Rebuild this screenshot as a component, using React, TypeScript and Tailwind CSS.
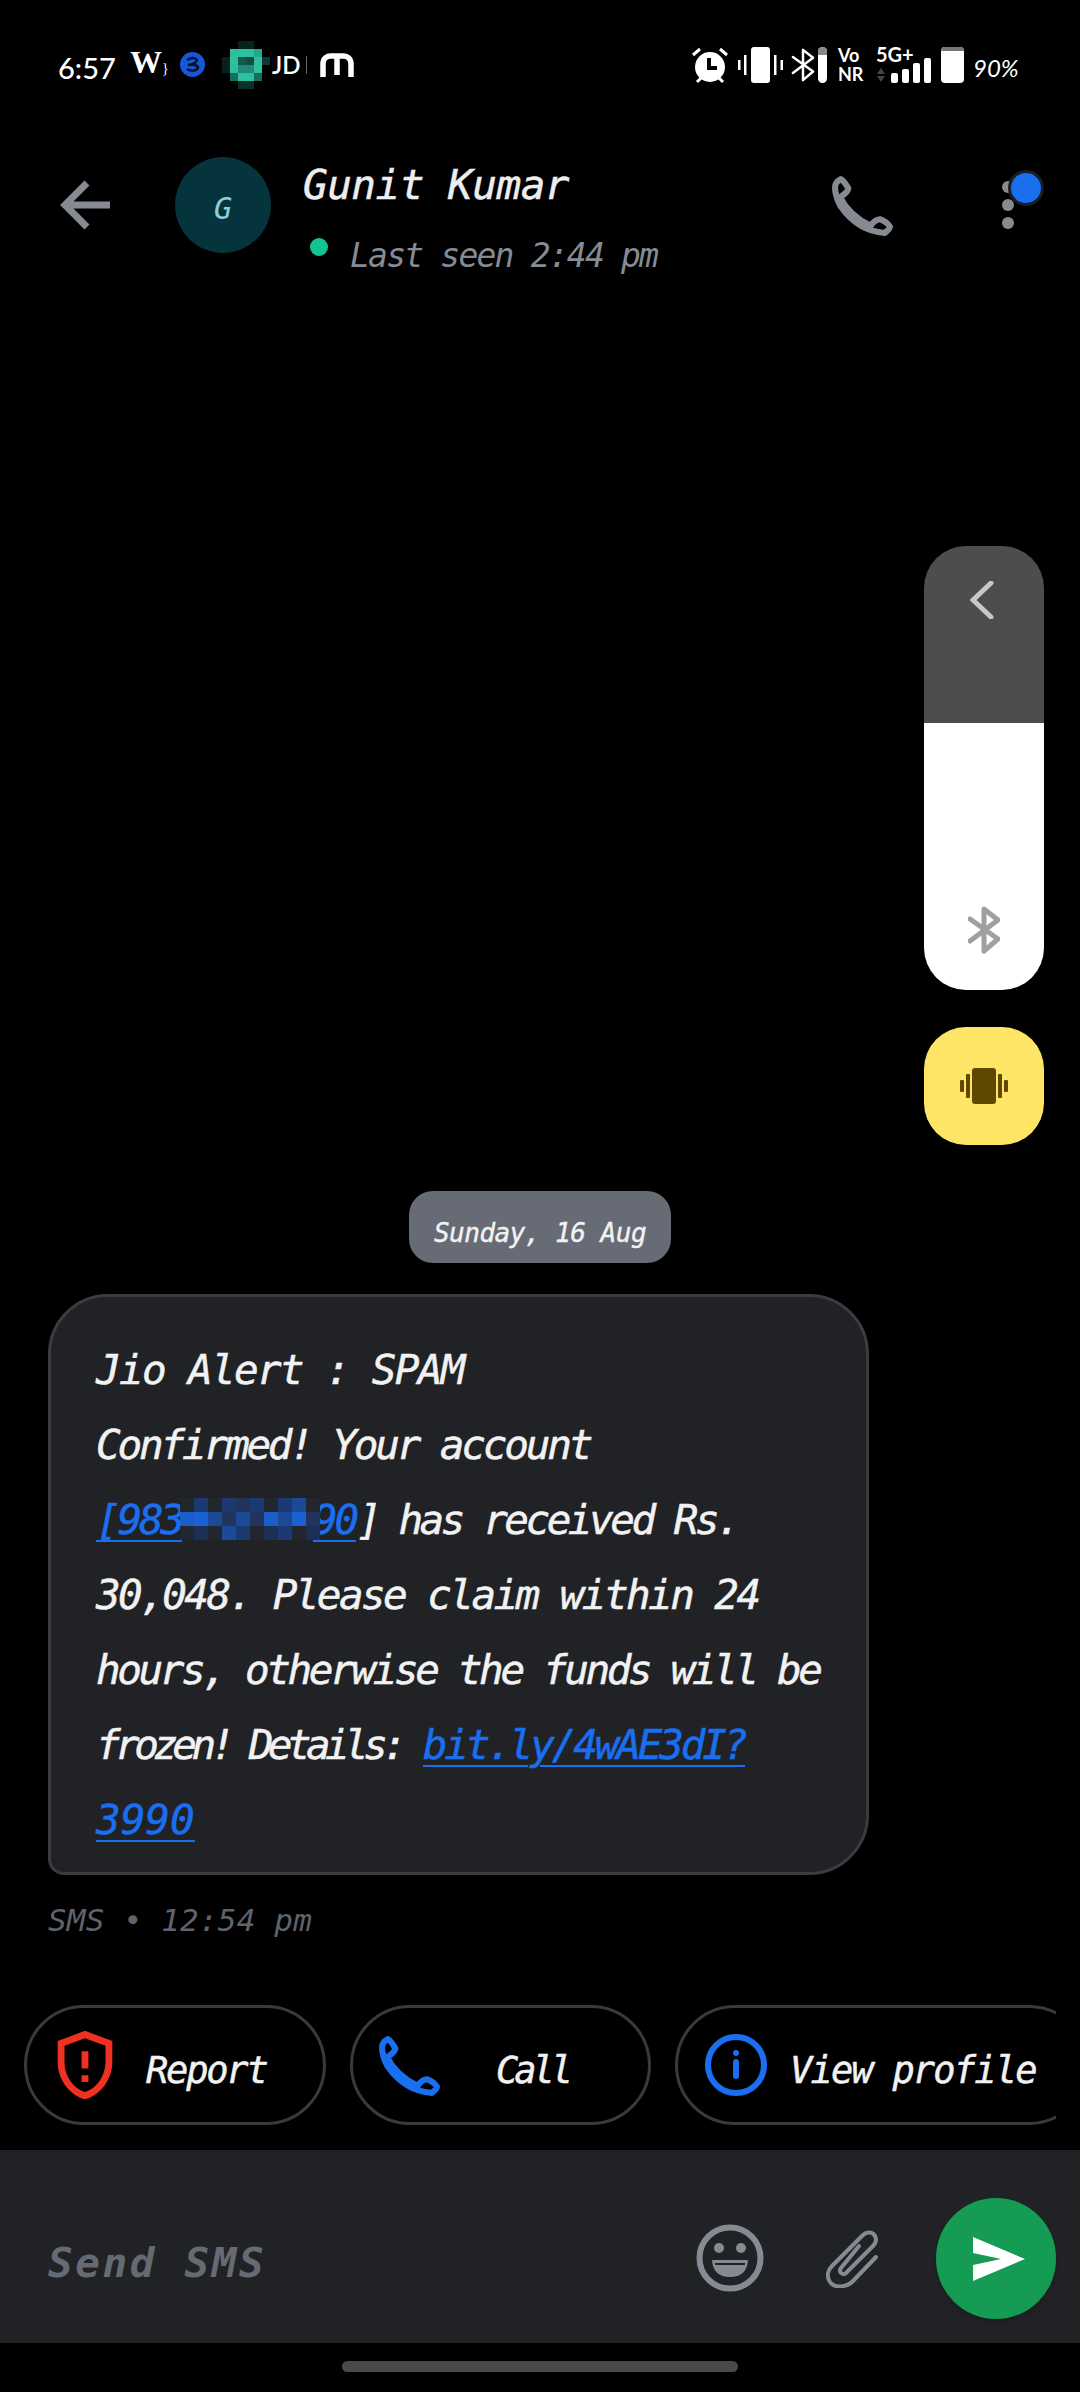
import type { ReactNode } from "react";

const bodyFont = "font-['DejaVu_Sans_Mono',monospace] italic";

const tealCells = [
  ["#000", "#000", "#04251f", "#04251f", "#000", "#000"],
  ["#000", "#2cc0a0", "#2cc0a0", "#2cc0a0", "#22a88c", "#000"],
  ["#06201b", "#2cc0a0", "#115a4c", "#0f4f43", "#2cc0a0", "#0a3a30"],
  ["#06201b", "#2cc0a0", "#1f8a75", "#1f8a75", "#2cc0a0", "#000"],
  ["#000", "#176d5c", "#2cc0a0", "#2cc0a0", "#176d5c", "#000"],
  ["#000", "#000", "#06322a", "#06322a", "#000", "#000"],
];

const mosaicCells = [
  ["#22262e", "#1b3a72", "#22262e", "#1b3a72", "#22335c", "#1b3a72", "#22262e", "#1b3a72", "#1c4a96", "#22262e"],
  ["#1a5ec8", "#1a62d2", "#1c4a96", "#22335c", "#1c4a96", "#22335c", "#1a5ec8", "#1c4a96", "#1a62d2", "#22335c"],
  ["#22262e", "#1c2f55", "#22262e", "#1c4a96", "#1b3a72", "#22262e", "#1c2f55", "#1b3a72", "#22262e", "#1c2f55"],
];

function Pixels({ cells, size, h }: { cells: string[][]; size: number; h?: number }) {
  const cols = cells[0].length;
  const rows = cells.length;
  const ch = h ?? size;
  return (
    <svg width={cols * size} height={rows * ch} className="block">
      {cells.map((row, y) =>
        row.map((c, x) => <rect key={x + "-" + y} x={x * size} y={y * ch} width={size + 0.5} height={ch + 0.5} fill={c} />)
      )}
    </svg>
  );
}

function PhoneIcon({ color, size }: { color: string; size: number }) {
  return (
    <svg width={size} height={size} viewBox="0 0 60 60" fill="none" stroke={color} strokeWidth="6" strokeLinejoin="round">
      <path d="M3 12 Q3 7 8.6 4 Q12 6 16 13 Q16.5 16 8 22 Q17 40 38 50 Q42 44 47 43.5 Q54 46 57 51 Q57 53 52 57 Q25 55 8 30 Q3 20 3 12 Z" />
    </svg>
  );
}

function Bluetooth({ color, w, h, sw }: { color: string; w: number; h: number; sw: number }) {
  return (
    <svg width={w} height={h} viewBox="0 0 32 50" fill="none" stroke={color} strokeWidth={sw} strokeLinejoin="round" strokeLinecap="round">
      <path d="M2 14 L30 34 L16 46 V4 L30 15 L2 36" />
    </svg>
  );
}

function StatusBar() {
  return (
    <div className="h-[130px] pl-[58px] pr-[60px] flex items-center justify-between text-white">
      <div className="flex items-center">
        <span className="font-['Lato',sans-serif] text-[29px] font-medium mt-[5px] w-[72px]">6:57</span>
        <span className="font-['Liberation_Serif',serif] font-bold text-[32px] w-[50px] -mt-[6px]">W<span className="text-[14px] font-normal">{"}"}</span></span>
        <svg width="25" height="25" viewBox="0 0 25 25" className="mr-[17px] -mt-[1px]">
          <circle cx="12.5" cy="12.5" r="12.5" fill="#1457d8" />
          <path d="M7 8 Q14 4 17 8 Q16 12 8 13 Q18 12 18 16 Q14 21 7 17" fill="none" stroke="#07102c" strokeWidth="2.5" />
        </svg>
        <div className="mr-[4px] w-[48px]"><Pixels cells={tealCells} size={8} /></div>
        <span className="font-['Lato',sans-serif] text-[24px] font-semibold w-[33px] -ml-[2px]">JD</span>
        <div className="w-px h-[18px] bg-[#666] mr-[13px] ml-[1px]"></div>
        <svg width="34" height="24" viewBox="0 0 34 24" fill="none" stroke="#fff" strokeWidth="5.5">
          <path d="M3 24 V11 C3 5 7 3 11 3 H23 C28 3 31 6 31 11 V24 M17 5 V22" />
        </svg>
      </div>
      <div className="flex items-center">
        <svg width="38" height="38" viewBox="0 0 38 38" className="mr-[9px]">
          <circle cx="19" cy="21" r="15" fill="#fff" />
          <path d="M18 12 V22 H26" fill="none" stroke="#000" strokeWidth="4" />
          <path d="M2 9 L9 3 M36 9 L29 3 M6 36 L10 32 M32 36 L28 32" stroke="#fff" strokeWidth="3" />
        </svg>
        <svg width="45" height="36" viewBox="0 0 45 36" className="mr-[8px]" fill="#fff">
          <rect x="13" y="0" width="19" height="36" rx="3" />
          <rect x="0" y="13" width="2.5" height="10" />
          <rect x="6" y="8" width="2.5" height="20" />
          <rect x="36" y="8" width="2.5" height="20" />
          <rect x="42.5" y="13" width="2.5" height="10" />
        </svg>
        <Bluetooth color="#fff" w={24} h={36} sw={3.5} />
        <div className="ml-[3px] w-[9px] h-[36px] rounded-full bg-white overflow-hidden mr-[11px]"><div className="h-[8px] bg-[#888]"></div></div>
        <div className="flex flex-col font-['Lato',sans-serif] font-bold text-[18px] leading-[19px] w-[38px]"><span>Vo</span><span>NR</span></div>
        <div className="w-[55px] relative h-[36px] mr-[10px]">
          <span className="absolute left-0 -top-[3px] font-['Lato',sans-serif] font-bold text-[20px] leading-[20px]">5G+</span>
          <svg width="10" height="14" viewBox="0 0 10 14" fill="#444" className="absolute left-0 bottom-[1px]">
            <path d="M5 0 L9 6 H1 Z M5 14 L9 8 H1 Z" />
          </svg>
          <div className="absolute right-0 bottom-0 flex items-end gap-[4px]">
            <div className="w-[7px] h-[10px] rounded-[2px] bg-white"></div>
            <div className="w-[7px] h-[14px] rounded-[2px] bg-white"></div>
            <div className="w-[7px] h-[20px] rounded-[2px] bg-white"></div>
            <div className="w-[7px] h-[25px] rounded-[2px] bg-white"></div>
          </div>
        </div>
        <div className="w-[23px] h-[36px] rounded-[4px] bg-white overflow-hidden mr-[9px]"><div className="h-[4px] bg-[#777]"></div></div>
        <span className="font-['Lato',sans-serif] italic text-[24px] mt-[5px] w-[47px]">90%</span>
      </div>
    </div>
  );
}

function Header() {
  return (
    <div className="h-[150px] flex items-center relative">
      <svg width="50" height="50" viewBox="0 0 50 50" fill="none" stroke="#868b93" strokeWidth="7" className="ml-[60px]">
        <path d="M50 25 H6 M27 3 L5 25 L27 47" />
      </svg>
      <div className="ml-[65px] w-[96px] h-[96px] rounded-full bg-[#06343c] flex items-center justify-center">
        <span className={bodyFont + " text-[#8fd0d6] text-[30px] mt-[6px]"}>G</span>
      </div>
      <div className="ml-[32px] self-start pt-[30px] flex flex-col">
        <div className={bodyFont + " text-[#eeeeee] text-[41px] leading-[50px] tracking-[-0.5px] [-webkit-text-stroke:0.5px]"}>Gunit Kumar</div>
        <div className="flex items-start mt-[28px]">
          <div className="ml-[7px] w-[18px] h-[18px] rounded-full bg-[#12c48f]"></div>
          <span className={bodyFont + " ml-[22px] text-[#868b93] text-[33px] leading-[36px] tracking-[-1.8px]"}>Last seen 2:44 pm</span>
        </div>
      </div>
      <div className="absolute left-[832px] top-[45px]"><PhoneIcon color="#868b93" size={61} /></div>
      <div className="absolute left-[1002px] top-[51px] flex flex-col gap-[6px]">
        <div className="w-[12px] h-[12px] rounded-full bg-[#868b93]"></div>
        <div className="w-[12px] h-[12px] rounded-full bg-[#868b93]"></div>
        <div className="w-[12px] h-[12px] rounded-full bg-[#868b93]"></div>
      </div>
      <div className="absolute left-[1008px] top-[40px] w-[36px] h-[36px] rounded-full bg-[#1a6ff0] border-[3px] border-[#1c1e24]"></div>
    </div>
  );
}

function FloatingVolume() {
  return (
    <div className="absolute left-[924px] top-[546px] w-[120px] flex flex-col gap-[37px]">
      <div className="h-[444px] rounded-[42px] overflow-hidden flex flex-col">
        <div className="h-[177px] bg-[#4d4d4d] flex justify-center pt-[35px]">
          <svg width="24" height="38" viewBox="0 0 24 38" fill="none" stroke="#c8c8c8" strokeWidth="5" strokeLinecap="round" className="-ml-[4px]">
            <path d="M21 2 L3 19 L21 36" />
          </svg>
        </div>
        <div className="flex-1 bg-white flex flex-col justify-end items-center pb-[35px]">
          <Bluetooth color="#a0a0a0" w={32} h={50} sw={5} />
        </div>
      </div>
      <div className="h-[118px] rounded-[42px] bg-[#ffe566] flex items-center justify-center">
        <svg width="48" height="36" viewBox="0 0 48 36" fill="#604800">
          <rect x="12" y="0" width="24" height="36" rx="3" />
          <rect x="0" y="12" width="4" height="12" rx="1" />
          <rect x="6" y="6" width="4" height="24" rx="1" />
          <rect x="38" y="6" width="4" height="24" rx="1" />
          <rect x="44" y="12" width="4" height="12" rx="1" />
        </svg>
      </div>
    </div>
  );
}

function Message() {
  const link = "text-[#1a6ff0] underline decoration-[2px] underline-offset-[6px]";
  return (
    <div className="ml-[48px] w-[821px] h-[581px] bg-[#202226] border-[3px] border-[#3a3c40] rounded-[60px] rounded-bl-[16px] pl-[45px] pt-[36px]">
      <div className={bodyFont + " text-[#f2f2f2] text-[41px] leading-[75px] tracking-[-3.2px] whitespace-nowrap [-webkit-text-stroke:0.5px]"}>
        <div className="tracking-[-1.7px]">Jio Alert : SPAM</div>
        <div>Confirmed! Your account</div>
        <div className="flex items-baseline">
          <span className={link + " flex items-baseline relative"}>
            <span>[983</span>
            <span className="w-[131px]"></span>
            <span>90</span>
            <span className="absolute left-[84px] top-[15px]"><Pixels cells={mosaicCells} size={14} /></span>
          </span>
          <span className="ml-[1px]">]</span>
          <span className="ml-[20px] tracking-[-3.5px]">has received Rs.</span>
        </div>
        <div className="tracking-[-2.6px]">30,048. Please claim within 24</div>
        <div className="tracking-[-3.4px]">hours, otherwise the funds will be</div>
        <div><span className="tracking-[-5.6px]">frozen! Details:</span> <span className={link}>bit.ly/4wAE3dI?</span></div>
        <div><span className={link + " tracking-[0px]"}>3990</span></div>
      </div>
    </div>
  );
}

function Chip({ width, icon, label, labelLeft, labelClass }: { width: number; icon: ReactNode; label: string; labelLeft: number; labelClass: string }) {
  return (
    <div className="h-[120px] shrink-0 rounded-[60px] border-[3px] border-[#3a3a3a] relative flex items-center" style={{ width }}>
      {icon}
      <span className={bodyFont + " absolute text-[#f2f2f2] text-[37px] [-webkit-text-stroke:0.5px] whitespace-nowrap mt-[12px] " + labelClass} style={{ left: labelLeft }}>{label}</span>
    </div>
  );
}

function Chips() {
  return (
    <div className="ml-[24px] w-[1032px] mt-[66px] overflow-hidden flex gap-[24px]">
      <Chip
        width={302}
        labelLeft={119}
        label="Report"
        labelClass="tracking-[-2.2px]"
        icon={
          <svg width="82" height="82" viewBox="0 0 24 24" fill="#f03020" className="ml-[17px]">
            <path d="M12 2L4 5v6.09c0 5.05 3.41 9.76 8 10.91 4.59-1.15 8-5.86 8-10.91V5l-8-3zm6 9.09c0 4-2.55 7.7-6 8.83-3.45-1.13-6-4.82-6-8.83v-4.7l6-2.25 6 2.25v4.7zM11 15h2v2h-2zm0-7h2v5h-2z" />
          </svg>
        }
      />
      <Chip
        width={301}
        labelLeft={143}
        label="Call"
        labelClass="tracking-[-4px]"
        icon={<div className="ml-[26px]"><PhoneIcon color="#1a6ff0" size={61} /></div>}
      />
      <Chip
        width={414}
        labelLeft={112}
        label="View profile"
        labelClass="tracking-[-1.8px]"
        icon={
          <svg width="62" height="62" viewBox="0 0 62 62" fill="none" stroke="#1a6ff0" strokeWidth="6" className="ml-[27px]">
            <circle cx="31" cy="31" r="28" />
            <path d="M31 28 V42" strokeLinecap="round" />
            <circle cx="31" cy="19" r="3" fill="#1a6ff0" stroke="none" />
          </svg>
        }
      />
    </div>
  );
}

function InputBar() {
  return (
    <div className="mt-[25px] h-[193px] bg-[#202226] flex items-center relative">
      <span className={bodyFont + " ml-[48px] text-[#666a73] text-[41px] font-bold tracking-[2.6px] mt-[34px]"}>Send SMS</span>
      <svg width="68" height="68" viewBox="0 0 68 68" className="absolute left-[696px] top-[74px]">
        <circle cx="34" cy="34" r="30.5" fill="none" stroke="#868b93" strokeWidth="6" />
        <circle cx="23" cy="24" r="5" fill="#868b93" />
        <circle cx="45" cy="24" r="5" fill="#868b93" />
        <path d="M16 36 H52 Q51 53 34 53 Q17 53 16 36 Z" fill="#868b93" />
        <path d="M19 40 H49" stroke="#202226" strokeWidth="2" />
      </svg>
      <svg width="52" height="58" viewBox="0 0 52 58" fill="none" stroke="#868b93" strokeWidth="4" strokeLinecap="round" className="absolute left-[826px] top-[80px]">
        <path d="M50 27 L27 51 C20 58 8 58 4 52 C0 46 2 40 6 36 L37 5 C41 1 47 2 49 6 C51 10 50 13 47 16 L20 43 C17 46 12 42 15 38 L33 16" />
      </svg>
      <div className="absolute left-[936px] top-[48px] w-[120px] h-[121px] rounded-full bg-[#169b55] shadow-md flex items-center justify-center">
        <svg width="52" height="44" viewBox="0 0 52 44" fill="#fff" className="ml-[6px]">
          <path d="M0 0 L52 22 L0 44 V28 L28 22 L0 16 Z" />
        </svg>
      </div>
    </div>
  );
}

export default function App() {
  return (
    <div className="w-[1080px] h-[2392px] bg-black relative flex flex-col overflow-hidden">
      <StatusBar />
      <Header />
      <div className="flex-1 flex flex-col justify-end">
        <div className="self-center w-[262px] h-[72px] rounded-[24px] bg-[#666b75] flex items-center justify-center mb-[31px]">
          <span className={bodyFont + " text-[#f2f2f2] text-[26px] tracking-[-0.5px] [-webkit-text-stroke:0.4px] mt-[12px]"}>Sunday, 16 Aug</span>
        </div>
        <Message />
        <div className={bodyFont + " ml-[48px] mt-[26px] text-[#5f636c] text-[31px] leading-[38px] tracking-[0.2px]"}>SMS • 12:54 pm</div>
        <Chips />
        <InputBar />
      </div>
      <div className="h-[49px] flex justify-center pt-[18px]">
        <div className="w-[396px] h-[11px] rounded-full bg-[#4a4a4a]"></div>
      </div>
      <FloatingVolume />
    </div>
  );
}
